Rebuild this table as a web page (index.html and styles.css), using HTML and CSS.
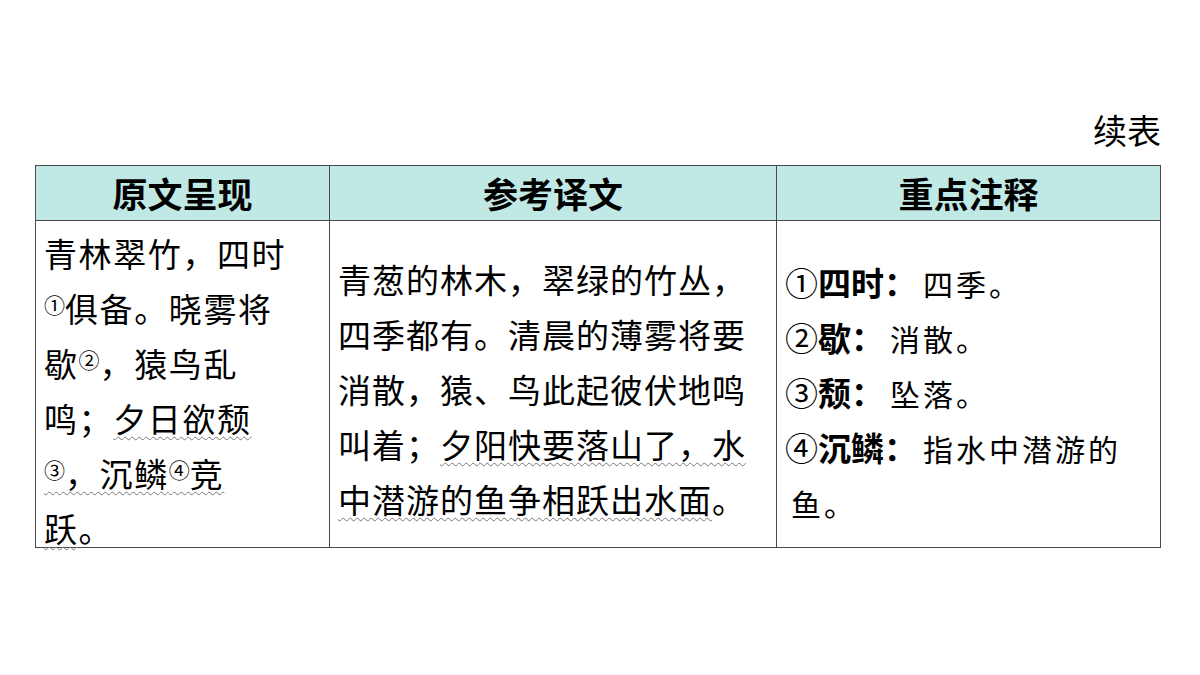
FILE: index.html
```html
<!DOCTYPE html>
<html lang="zh-CN">
<head>
<meta charset="utf-8">
<title>续表</title>
<link rel="stylesheet" href="styles.css">
</head>
<body>
<div class="page">
  <div class="caption">续表</div>
  <div class="table">
    <div class="th">原文呈现</div>
    <div class="th">参考译文</div>
    <div class="th">重点注释</div>
    <div class="td c1">
      <div class="ln">青林翠竹，四时</div>
      <div class="ln"><span class="sup">①</span>俱备。晓雾将</div>
      <div class="ln">歇<span class="sup">②</span>，猿鸟乱</div>
      <div class="ln">鸣；<span class="wave">夕日欲颓</span></div>
      <div class="ln"><span class="wave"><span class="sup">③</span>，沉鳞<span class="sup">④</span>竞</span></div>
      <div class="ln last"><span class="wave">跃</span>。</div>
    </div>
    <div class="td c2">
      <div class="ln">青葱的林木，翠绿的竹丛，</div>
      <div class="ln">四季都有。清晨的薄雾将要</div>
      <div class="ln">消散，猿、鸟此起彼伏地鸣</div>
      <div class="ln">叫着；<span class="wave">夕阳快要落山了，水</span></div>
      <div class="ln"><span class="wave">中潜游的鱼争相跃出水面</span>。</div>
    </div>
    <div class="td c3">
      <div class="ln">①<b>四时：</b><span class="kai">四季。</span></div>
      <div class="ln">②<b>歇：</b><span class="kai">消散。</span></div>
      <div class="ln">③<b>颓：</b><span class="kai">坠落。</span></div>
      <div class="ln">④<b>沉鳞：</b><span class="kai">指水中潜游的</span></div>
      <div class="ln"><span class="kai">鱼。</span></div>
    </div>
  </div>
</div>
</body>
</html>
```

FILE: styles.css
```css
html, body {
  margin: 0;
  padding: 0;
  background: #ffffff;
}
.page {
  width: 1200px;
  height: 675px;
  box-sizing: border-box;
  padding: 107px 0 0 35px;
  font-family: "Noto Sans CJK SC", "Noto Sans", sans-serif;
  color: #000;
}
.caption {
  width: 1126px;
  text-align: right;
  font-size: 34px;
  line-height: 46px;
  height: 46px;
  margin-bottom: 12px;
}
.table {
  display: grid;
  grid-template-columns: 293px 447px 1fr;
  grid-template-rows: 55px 326px;
  width: 1126px;
  box-sizing: border-box;
  border: 1px solid #4a4a4a;
}
.th {
  background: #c0e9e6;
  border-bottom: 1px solid #4a4a4a;
  font-weight: 700;
  font-size: 35px;
  line-height: 54px;
  text-align: center;
}
.th + .th, .td + .td {
  border-left: 1px solid #4a4a4a;
}
.td {
  padding-left: 8px;
  font-size: 33px;
  white-space: nowrap;
}
.ln {
  height: 55px;
  line-height: 55px;
}
.c1 {
  letter-spacing: 1.6px;
}
.c1 .ln {
  box-sizing: border-box;
  padding-top: 14px;
  line-height: 36px;
}
.c1 .ln.last {
  height: 49px;
}
.c2 {
  padding-top: 31px;
  letter-spacing: 1px;
}
.c3 {
  padding-top: 34px;
}
.sup {
  font-size: 21px;
  vertical-align: 9px;
  line-height: 1;
  letter-spacing: 0;
}
.wave {
  text-decoration: underline wavy #777;
  text-decoration-thickness: 1px;
  text-underline-offset: 4px;
}
b {
  font-weight: 700;
}
.kai {
  font-size: 30px;
  letter-spacing: 3px;
  font-weight: 400;
  margin-left: 6px;
}
```
